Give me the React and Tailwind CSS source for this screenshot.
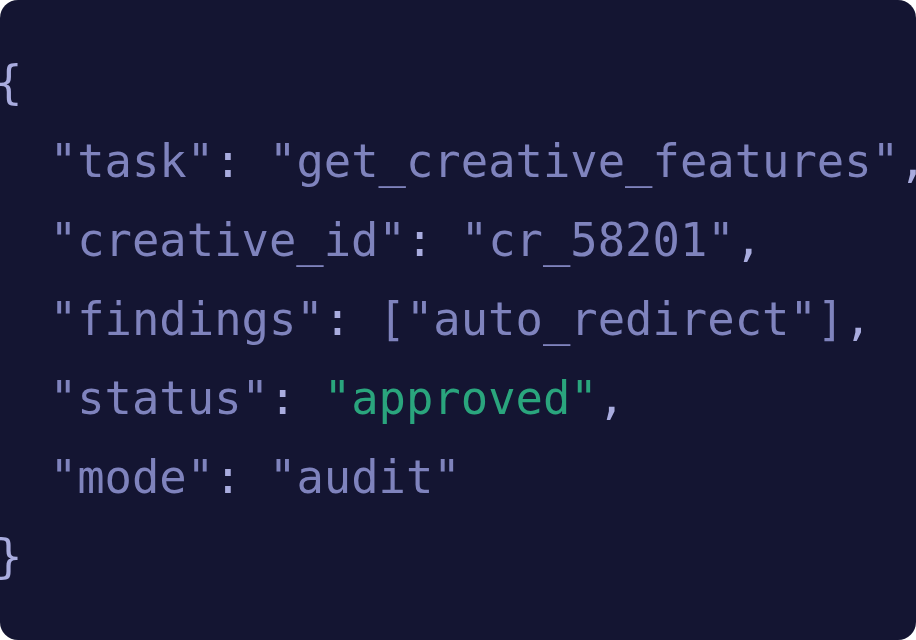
export default function App() {
  const base = "text-[#7f83bd]";
  const punct = "text-[#a9acdf]";
  const green = "text-[#2aa57d]";
  return (
    <div className="w-[916px] h-[640px] bg-white">
      <div className="w-[916px] h-[640px] rounded-[18px] bg-[#141532] overflow-hidden pt-[43px]">
        <pre
          className={`ml-[-5px] text-[45.5px] leading-[79px] font-medium blur-[0.6px] ${base}`}
          style={{ fontFamily: '"DejaVu Sans Mono", "Liberation Mono", monospace' }}
        >
          <div className={punct}>{"{"}</div>
          <div>
            {"  "}
            <span>"task"</span>
            <span className={punct}>:</span> <span>"get_creative_features"</span>
            <span className={punct}>,</span>
          </div>
          <div>
            {"  "}
            <span>"creative_id"</span>
            <span className={punct}>:</span> <span>"cr_58201"</span>
            <span className={punct}>,</span>
          </div>
          <div>
            {"  "}
            <span>"findings"</span>
            <span className={punct}>:</span> <span>["auto_redirect"]</span>
            <span className={punct}>,</span>
          </div>
          <div>
            {"  "}
            <span>"status"</span>
            <span className={punct}>:</span> <span className={green}>"approved"</span>
            <span className={punct}>,</span>
          </div>
          <div>
            {"  "}
            <span>"mode"</span>
            <span className={punct}>:</span> <span>"audit"</span>
          </div>
          <div className={punct}>{"}"}</div>
        </pre>
      </div>
    </div>
  );
}
